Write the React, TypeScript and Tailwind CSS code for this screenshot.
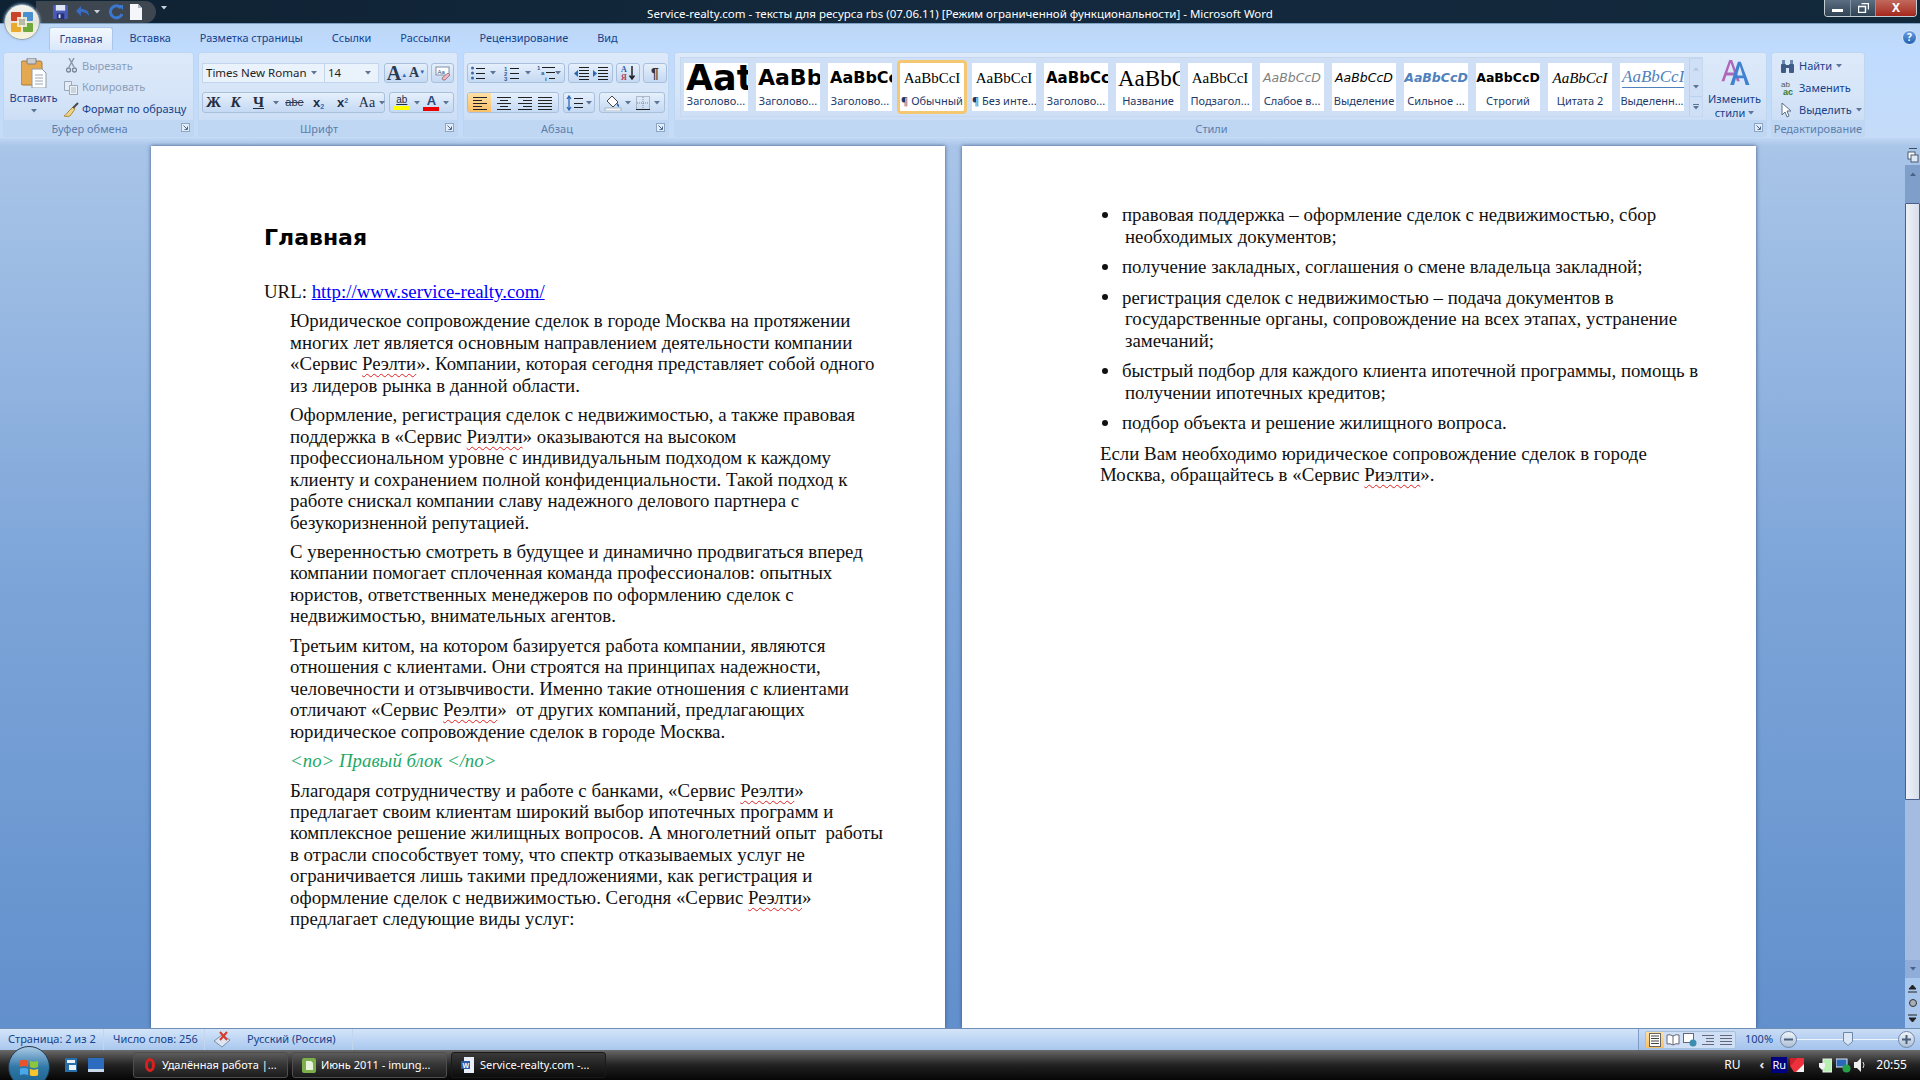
import type { ReactNode } from "react";

function Sp({ children }: { children: ReactNode }) {
  return <span className="underline decoration-wavy decoration-[#e02020] decoration-1 underline-offset-[3px]">{children}</span>;
}

function Para({ children, cls = "" }: { children: ReactNode; cls?: string }) {
  return <p className={`mb-[8px] whitespace-nowrap ${cls}`}>{children}</p>;
}

function Caret({ color = "#5d7596" }: { color?: string }) {
  return (
    <svg width="6" height="4" viewBox="0 0 6 4" className="shrink-0">
      <path d="M0 0h6L3 3.5z" fill={color} />
    </svg>
  );
}

function Launcher() {
  return (
    <svg width="9" height="9" viewBox="0 0 9 9">
      <rect x="0.5" y="0.5" width="8" height="8" fill="#e3edfa" stroke="#8ca6c6" />
      <path d="M2.5 2.5l3.5 3.5M6.5 3.5v3h-3" stroke="#4c6a93" fill="none" />
    </svg>
  );
}

function Group({ w, label, children, launcher = true }: { w: string; label: string; children: ReactNode; launcher?: boolean }) {
  return (
    <div className={`${w} h-[85px] shrink-0 flex flex-col rounded-[3px] border border-[#c0d5ee] bg-gradient-to-b from-[#dce9fa] via-[#d6e5f8] to-[#c6daf4] overflow-hidden`}>
      <div className="flex-1 min-h-0">{children}</div>
      <div className={`relative h-[16px] shrink-0 bg-[#c0d7f3] flex items-center justify-center text-[11px] text-[#5a7ead] leading-none whitespace-nowrap ${launcher ? "pr-[18px]" : ""}`}>
        {label}
        {launcher && (
          <span className="absolute right-[3px] top-[3px] flex">
            <Launcher />
          </span>
        )}
      </div>
    </div>
  );
}

function Seg({ w, children, start = false }: { w: string; children: ReactNode; start?: boolean }) {
  return (
    <div className={`${w} h-full shrink-0 flex items-center ${start ? "justify-start" : "justify-evenly"} rounded-[3px] border border-[#a9c0dc] bg-gradient-to-b from-[#e6f0fc] via-[#d5e4f7] to-[#c4d9f3]`}>
      {children}
    </div>
  );
}

function Cell({ w, children }: { w: string; children: ReactNode }) {
  return <span className={`${w} shrink-0 flex items-center justify-center`}>{children}</span>;
}

function Lines({ ys, x1 = 1, x2 = 15, w = 1 }: { ys: number[]; x1?: number; x2?: number; w?: number }) {
  return <>{ys.map((y) => <path key={y} d={`M${x1} ${y}H${x2}`} stroke="#1d1d1d" strokeWidth={w} />)}</>;
}

function Align({ kind }: { kind: "l" | "c" | "r" | "j" }) {
  const rows = [2.5, 5.5, 8.5, 11.5, 14.5];
  return (
    <svg width="16" height="16" viewBox="0 0 16 16">
      {rows.map((y, i) => {
        const short = i % 2 === 1;
        let a = 1;
        let b = 15;
        if (short && kind === "l") b = 10;
        if (short && kind === "c") { a = 4; b = 12; }
        if (short && kind === "r") a = 6;
        return <path key={y} d={`M${a} ${y}H${b}`} stroke="#222" />;
      })}
    </svg>
  );
}

function BulletIcon() {
  return (
    <svg width="16" height="16" viewBox="0 0 16 16" className="shrink-0">
      <circle cx="2.5" cy="3" r="1.5" fill="#3d6aa5" /><circle cx="2.5" cy="8" r="1.5" fill="#3d6aa5" /><circle cx="2.5" cy="13" r="1.5" fill="#3d6aa5" />
      <Lines ys={[3.5, 8.5, 13.5]} x1={6} />
    </svg>
  );
}

function NumberIcon() {
  return (
    <svg width="16" height="16" viewBox="0 0 16 16" className="shrink-0">
      <g fill="#2e5c99" fontSize="6" fontFamily="Liberation Sans, sans-serif" fontWeight="700">
        <text x="0" y="6">1</text><text x="0" y="11">2</text><text x="0" y="16">3</text>
      </g>
      <Lines ys={[3.5, 8.5, 13.5]} x1={6} />
    </svg>
  );
}

function MultiIcon() {
  return (
    <svg width="18" height="16" viewBox="0 0 18 16" className="shrink-0">
      <g fill="#2e5c99" fontSize="6" fontFamily="Liberation Sans, sans-serif" fontWeight="700">
        <text x="0" y="5">1</text><text x="4" y="10">a</text><text x="8" y="16">i</text>
      </g>
      <path d="M5 2.5H18M9 7.5H18M12 13.5H18" stroke="#1d1d1d" />
    </svg>
  );
}

function Indent({ flip = false }: { flip?: boolean }) {
  return (
    <svg width="16" height="16" viewBox="0 0 16 16">
      <Lines ys={[2.5, 5.5, 8.5, 11.5, 14.5]} x1={6} x2={16} />
      <path d={flip ? "M1 5l4 3.5-4 3.5z" : "M5 5L1 8.5 5 12z"} fill="#2c69b5" />
    </svg>
  );
}

function StyleTile({ preview, label, sel = false, left = false }: { preview: ReactNode; label: string; sel?: boolean; left?: boolean }) {
  return (
    <div className={`w-[64px] h-[48px] shrink-0 bg-white flex flex-col overflow-hidden ${sel ? "outline-[3px] outline-[#f4c873] rounded-[1px]" : ""}`}>
      <div className={`h-[30px] shrink-0 flex items-center overflow-hidden whitespace-nowrap text-black leading-none ${left ? "justify-start pl-[2px]" : "justify-center"}`}>{preview}</div>
      <div className="flex-1 text-center text-[11px] leading-[16px] whitespace-nowrap overflow-hidden text-[#1b3a6b]">{label}</div>
    </div>
  );
}

function EditRow({ icon, label, caret = false }: { icon: ReactNode; label: string; caret?: boolean }) {
  return (
    <div className="h-[22px] flex items-center gap-[4px] pl-[7px] text-[11px]">
      <span className="w-[16px] flex justify-center">{icon}</span>
      <span>{label}</span>
      {caret && <Caret />}
    </div>
  );
}

function ClipRow({ icon, label, dim = false }: { icon: ReactNode; label: string; dim?: boolean }) {
  return (
    <div className={`h-[22px] flex items-center gap-[3px] text-[11px] whitespace-nowrap ${dim ? "text-[#8b9fb9]" : ""}`}>
      <span className="w-[16px] flex justify-center">{icon}</span>
      <span>{label}</span>
    </div>
  );
}

function OfficeOrb() {
  return (
    <div className="absolute left-[4px] top-[4px] w-[36px] h-[36px] rounded-full bg-gradient-to-b from-[#f4f4f0] via-[#e4e4dc] to-[#fbf6dc] border border-[#90a4b4] shadow-[0_0_3px_#9fc0e8] flex items-center justify-center">
      <svg width="24" height="22" viewBox="0 0 24 22">
        <rect x="1" y="1" width="10" height="9" rx="1" fill="#c8452a" />
        <rect x="13" y="1" width="10" height="9" rx="1" fill="#4a8fcf" />
        <rect x="1" y="12" width="10" height="9" rx="1" fill="#e8a92e" />
        <rect x="13" y="12" width="10" height="9" rx="1" fill="#6fa83c" />
        <rect x="7" y="6" width="10" height="10" fill="#f7f3e0" opacity="0.85" />
        <path d="M9 9h6M9 11h6M9 13h6" stroke="#7b8b6e" />
      </svg>
    </div>
  );
}

function Qat() {
  return (
    <div className="ml-[36px] mt-[1px] w-[120px] h-[22px] rounded-r-full bg-[#3e4650] flex items-center pl-[17px]">
      <svg width="15" height="14" viewBox="0 0 16 15" className="shrink-0">
        <rect width="16" height="15" rx="1" fill="#4a5bb5" />
        <rect x="3" y="0" width="10" height="6" fill="#dfe6f7" />
        <rect x="4" y="9" width="8" height="6" fill="#243179" />
        <rect x="6" y="10" width="2" height="4" fill="#dfe6f7" />
      </svg>
      <svg width="15" height="14" viewBox="0 0 15 14" className="ml-[7px] shrink-0">
        <path d="M1 6l5-5v3c5 0 8 2 8 7-2-3-4-4-8-4v4z" fill="#3a6cc5" />
      </svg>
      <span className="ml-[4px] flex"><Caret color="#c8d2dc" /></span>
      <svg width="16" height="16" viewBox="0 0 16 16" className="ml-[8px] shrink-0">
        <path d="M13 4a6 6 0 1 0 1 6" fill="none" stroke="#3a78d0" strokeWidth="3" />
        <path d="M10 1h5v5z" fill="#3a78d0" />
      </svg>
      <svg width="12" height="16" viewBox="0 0 12 16" className="ml-[6px] shrink-0">
        <path d="M0 0h8l4 4v12H0z" fill="#f4f6fa" />
        <path d="M8 0l4 4H8z" fill="#aeb8c4" />
      </svg>
    </div>
  );
}

function WinButtons() {
  return (
    <div className="ml-auto mr-[3px] w-[93px] h-[17px] flex rounded-b-[4px] border border-t-0 border-[#c4ccd4] overflow-hidden">
      <div className="w-[26px] bg-gradient-to-b from-[#5c6f82] to-[#2f4355] flex items-center justify-center border-r border-[#8796a4]">
        <div className="w-[11px] h-[3px] mt-[4px] bg-white" />
      </div>
      <div className="w-[25px] bg-gradient-to-b from-[#5c6f82] to-[#2f4355] flex items-center justify-center border-r border-[#8796a4]">
        <svg width="11" height="10" viewBox="0 0 11 10"><path d="M3.5 .5h7v6M.5 3.5h7v6h-7z" stroke="#fff" fill="none" strokeWidth="1.4" /></svg>
      </div>
      <div className="flex-1 bg-gradient-to-b from-[#c2685c] to-[#a4261c] flex items-center justify-center text-white text-[12px] font-bold leading-none">X</div>
    </div>
  );
}

function StartOrb() {
  return (
    <div className="absolute left-[8px] bottom-[-8px] w-[42px] h-[42px] rounded-full bg-gradient-to-b from-[#a9cbe6] via-[#2f78a8] to-[#1b5f8c] border border-[#24384a] flex items-center justify-center">
      <svg width="20" height="20" viewBox="0 0 22 22">
        <path d="M1 4q4-2 9 0v7q-5-2-9 0z" fill="#e8532c" />
        <path d="M12 4q4 2 9 0v7q-5 2-9 0z" fill="#8cc63f" />
        <path d="M1 13q4-2 9 0v7q-5-2-9 0z" fill="#4aa8ea" />
        <path d="M12 13q4 2 9 0v7q-5 2-9 0z" fill="#f6c42b" />
      </svg>
    </div>
  );
}

function TaskBtn({ icon, label, active = false }: { icon: ReactNode; label: string; active?: boolean }) {
  return (
    <div className={`w-[155px] h-[26px] shrink-0 flex items-center gap-[4px] pl-[8px] text-white text-[11px] whitespace-nowrap rounded-[3px] border ${active ? "border-[#1a1a1a] bg-gradient-to-b from-[#3a3a3a] to-[#0c0c0c]" : "border-[#4e4e4e] bg-gradient-to-b from-[#5c5c5c] via-[#353535] to-[#1c1c1c]"}`}>
      <span className="w-[16px] flex justify-center">{icon}</span>
      <span>{label}</span>
    </div>
  );
}

const tiles: { label: string; sel?: boolean; left?: boolean; preview: ReactNode }[] = [
  { label: "Заголово...", left: true, preview: <span className="font-['DejaVu_Sans',sans-serif] font-bold text-[35px]">Aat</span> },
  { label: "Заголово...", left: true, preview: <span className="font-['DejaVu_Sans',sans-serif] font-bold text-[22px]">AaBb</span> },
  { label: "Заголово...", left: true, preview: <span className="font-['DejaVu_Sans',sans-serif] font-bold text-[16px]">AaBbCc</span> },
  { label: "¶ Обычный", sel: true, preview: <span className="font-['Liberation_Serif',serif] text-[15px]">AaBbCcI</span> },
  { label: "¶ Без инте...", preview: <span className="font-['Liberation_Serif',serif] text-[15px]">AaBbCcI</span> },
  { label: "Заголово...", left: true, preview: <span className="font-['DejaVu_Sans',sans-serif] font-bold text-[15px]">AaBbCc</span> },
  { label: "Название", left: true, preview: <span className="font-['Liberation_Serif',serif] text-[23px]">AaBbCc</span> },
  { label: "Подзагол...", preview: <span className="font-['Liberation_Serif',serif] text-[15px]">AaBbCcI</span> },
  { label: "Слабое в...", preview: <span className="font-['DejaVu_Sans',sans-serif] italic text-[12.5px] text-[#808080]">AaBbCcD</span> },
  { label: "Выделение", preview: <span className="font-['DejaVu_Sans',sans-serif] italic text-[12.5px]">AaBbCcD</span> },
  { label: "Сильное ...", preview: <span className="font-['DejaVu_Sans',sans-serif] italic font-bold text-[12.5px] text-[#4f81bd]">AaBbCcD</span> },
  { label: "Строгий", preview: <span className="font-['DejaVu_Sans',sans-serif] font-bold text-[12.5px]">AaBbCcD</span> },
  { label: "Цитата 2", preview: <span className="font-['Liberation_Serif',serif] italic text-[15px]">AaBbCcI</span> },
  { label: "Выделенн...", left: true, preview: <span className="font-['Liberation_Serif',serif] italic text-[17px] text-[#4f81bd] border-b border-[#4f81bd] pb-[2px]">AaBbCcI</span> },
];

function Ribbon() {
  return (
    <div className="h-[88px] shrink-0 flex pl-[3px] pt-[2px] bg-gradient-to-b from-[#bfdbff] to-[#c5dcf8] text-[#15428b]">
      <Group w="w-[191px]" label="Буфер обмена">
        <div className="flex h-full">
          <div className="w-[59px] shrink-0 flex flex-col items-center pt-[5px]">
            <svg width="26" height="30" viewBox="0 0 26 30">
              <rect x="0" y="3" width="21" height="24" rx="2" fill="#e4a950" stroke="#a87a33" />
              <rect x="6" y="0" width="9" height="6" rx="1" fill="#c9ccd0" stroke="#7c7f84" />
              <path d="M11 11h10l4 4v15H11z" fill="#fff" stroke="#8e9aa8" />
              <path d="M14 17h8M14 20h8M14 23h8M14 26h8" stroke="#9aa6b4" />
            </svg>
            <div className="text-[11px] mt-[3px] leading-[14px]">Вставить</div>
            <div className="mt-[4px]"><Caret /></div>
          </div>
          <div className="flex flex-col pt-[2px]">
            <ClipRow dim label="Вырезать" icon={
              <svg width="11" height="15" viewBox="0 0 11 15"><path d="M3 0l5 9M8 0L3 9" stroke="#8a98aa" strokeWidth="1.5" /><circle cx="2.5" cy="12" r="2" fill="none" stroke="#7b8798" strokeWidth="1.3" /><circle cx="8.5" cy="12" r="2" fill="none" stroke="#7b8798" strokeWidth="1.3" /></svg>
            } />
            <ClipRow dim label="Копировать" icon={
              <svg width="14" height="14" viewBox="0 0 14 14"><path d="M.5 .5h7v9h-7z" fill="#e4ecf5" stroke="#9aa8ba" /><path d="M5.5 4.5h8v9h-8z" fill="#eef3f9" stroke="#9aa8ba" /><path d="M7 7h5M7 9h5M7 11h5" stroke="#aab6c5" /></svg>
            } />
            <ClipRow label="Формат по образцу" icon={
              <svg width="15" height="15" viewBox="0 0 15 15"><path d="M9 5l2 2-5 7q-3 1-6 0 3-2 4-4z" fill="#efd58a" stroke="#a88c3e" /><path d="M9 6l5-5" stroke="#4a4a4a" strokeWidth="2" /></svg>
            } />
          </div>
        </div>
      </Group>

      <div className="w-[4px] shrink-0" />
      <Group w="w-[260px]" label="Шрифт">
        <div className="pl-[3px] pt-[10px] flex flex-col gap-[9px]">
          <div className="h-[20px] flex">
            <div className="w-[123px] h-full flex items-center justify-between pl-[3px] pr-[7px] bg-[#eaf2fc] border border-[#c2d5ec] text-[11.5px] text-[#1e1e1e]">
              Times New Roman <Caret />
            </div>
            <div className="w-[54px] h-full flex items-center justify-between pl-[3px] pr-[7px] bg-[#eaf2fc] border border-l-0 border-[#c2d5ec] text-[11.5px] text-[#1e1e1e]">
              14 <Caret />
            </div>
            <div className="w-[5px]" />
            <Seg w="w-[44px]">
              <span className="font-['Liberation_Serif',serif] font-bold text-[20px] leading-none text-[#2a3a52]">A<sup className="text-[6px] text-[#2c69b5]">▲</sup></span>
              <span className="font-['Liberation_Serif',serif] font-bold text-[14px] leading-none text-[#2a3a52]">A<sup className="text-[6px] text-[#2c69b5]">▼</sup></span>
            </Seg>
            <div className="w-[3px]" />
            <Seg w="w-[23px]">
              <svg width="16" height="15" viewBox="0 0 16 15">
                <rect x="1" y="1" width="13" height="8" fill="#fff" stroke="#7f8fa4" />
                <text x="2.5" y="7.5" fontSize="6" fontFamily="Liberation Sans, sans-serif" fill="#2b4a7a">Aa</text>
                <path d="M7 12l6-5 2 2-5 5H8z" fill="#f1b7c4" stroke="#a27b86" />
              </svg>
            </Seg>
          </div>
          <div className="h-[21px] flex">
            <Seg w="w-[183px]" start>
              <Cell w="w-[21px]"><span className="font-['Liberation_Serif',serif] font-bold text-[15px] text-[#1f2d40]">Ж</span></Cell>
              <Cell w="w-[23px]"><span className="font-['Liberation_Serif',serif] font-bold italic text-[15px] text-[#1f2d40]">К</span></Cell>
              <Cell w="w-[23px]"><span className="font-['Liberation_Serif',serif] font-bold underline text-[15px] text-[#1f2d40]">Ч</span></Cell>
              <Cell w="w-[12px]"><Caret /></Cell>
              <Cell w="w-[25px]"><span className="font-['Liberation_Sans',sans-serif] line-through text-[11px] text-[#2a3a52]">abe</span></Cell>
              <Cell w="w-[23px]"><span className="font-['Liberation_Sans',sans-serif] font-bold text-[13px] text-[#1f2d40]">x<sub className="text-[7px] text-[#2c69b5]">2</sub></span></Cell>
              <Cell w="w-[25px]"><span className="font-['Liberation_Sans',sans-serif] font-bold text-[13px] text-[#1f2d40]">x<sup className="text-[7px] text-[#2c69b5]">2</sup></span></Cell>
              <Cell w="w-[24px]"><span className="font-['Liberation_Serif',serif] text-[14px] text-[#1f2d40]">Aa</span></Cell>
              <Caret />
            </Seg>
            <div className="w-[4px]" />
            <Seg w="w-[65px]">
              <span className="flex flex-col items-center leading-none">
                <span className="text-[10px] text-[#1f2d40] font-['Liberation_Sans',sans-serif] underline">ab</span>
                <span className="w-[16px] h-[4px] bg-[#ffff00] mt-[1px]" />
              </span>
              <Caret />
              <span className="flex flex-col items-center leading-none">
                <span className="text-[13px] text-[#2c4a7d] font-bold font-['Liberation_Sans',sans-serif]">A</span>
                <span className="w-[16px] h-[4px] bg-[#ee0000]" />
              </span>
              <Caret />
            </Seg>
          </div>
        </div>
      </Group>

      <div className="w-[5px] shrink-0" />
      <Group w="w-[206px]" label="Абзац">
        <div className="pl-[3px] pt-[10px] flex flex-col gap-[9px]">
          <div className="h-[20px] flex">
            <Seg w="w-[98px]" start>
              <span className="ml-[2px] flex"><BulletIcon /></span>
              <span className="ml-[4px] flex"><Caret /></span>
              <span className="ml-[8px] flex"><NumberIcon /></span>
              <span className="ml-[5px] flex"><Caret /></span>
              <span className="ml-[6px] flex"><MultiIcon /></span>
              <Caret />
            </Seg>
            <div className="w-[3px]" />
            <Seg w="w-[45px]"><Indent /><Indent flip /></Seg>
            <div className="w-[3px]" />
            <Seg w="w-[24px]">
              <svg width="16" height="16" viewBox="0 0 16 16">
                <text x="1" y="7" fontSize="8" fontWeight="700" fontFamily="Liberation Serif, serif" fill="#2c5fa8">А</text>
                <text x="1" y="15" fontSize="8" fontWeight="700" fontFamily="Liberation Serif, serif" fill="#b0405a">Я</text>
                <path d="M12 1v12M9.5 10.5L12 14l2.5-3.5" stroke="#222" strokeWidth="1.5" fill="none" />
              </svg>
            </Seg>
            <div className="w-[3px]" />
            <Seg w="w-[24px]"><span className="font-['Liberation_Sans',sans-serif] font-bold text-[14px] text-[#333]">¶</span></Seg>
          </div>
          <div className="h-[21px] flex">
            <div className="w-[92px] h-full flex rounded-[3px] border border-[#a9c0dc] overflow-hidden bg-gradient-to-b from-[#e6f0fc] to-[#c4d9f3]">
              <div className="w-[23px] flex items-center justify-center bg-gradient-to-b from-[#fde0a5] to-[#f9bf66]"><Align kind="l" /></div>
              <div className="flex-1 flex items-center justify-evenly"><Align kind="c" /><Align kind="r" /><Align kind="j" /></div>
            </div>
            <div className="w-[4px]" />
            <Seg w="w-[32px]">
              <svg width="17" height="16" viewBox="0 0 17 16">
                <path d="M3 1v14M1 4l2-3 2 3M1 12l2 3 2-3" stroke="#2c69b5" fill="none" strokeWidth="1.3" />
                <path d="M8 3.5h9M8 8.5h9M8 12.5h9" stroke="#222" />
              </svg>
              <Caret />
            </Seg>
            <div className="w-[4px]" />
            <Seg w="w-[66px]">
              <svg width="18" height="16" viewBox="0 0 18 16">
                <path d="M8 1l6 6-5 5-6-6z" fill="#fff" stroke="#444" />
                <path d="M13 8q3 2 2 4-3-1-2-4z" fill="#2c69b5" />
                <rect x="1" y="13" width="16" height="3" fill="#f6f6f6" stroke="#8b96a5" strokeWidth="0.6" />
              </svg>
              <Caret />
              <svg width="16" height="16" viewBox="0 0 16 16">
                <rect x="1.5" y="1.5" width="13" height="13" fill="none" stroke="#7c8796" strokeDasharray="1 1" />
                <path d="M8 2v12M2 8h12" stroke="#7c8796" strokeDasharray="1 1" />
                <path d="M1 14.5h14" stroke="#222" />
              </svg>
              <Caret />
            </Seg>
          </div>
        </div>
      </Group>

      <div className="w-[5px] shrink-0" />
      <Group w="w-[1093px]" label="Стили">
        <div className="flex h-full">
          <div className="ml-[5px] mt-[4px] h-[60px] w-[1023px] shrink-0 flex border border-[#c5d8ef] bg-[#cfe0f6]">
            <div className="flex-1 flex items-center gap-[8px] pl-[3px]">
              {tiles.map((t, i) => <StyleTile key={i} {...t} />)}
            </div>
            <div className="w-[13px] shrink-0 flex flex-col border-l border-[#bcd2ec]">
              <div className="flex-1 flex items-center justify-center border-b border-[#bcd2ec] rotate-180"><Caret color="#b5c4d8" /></div>
              <div className="flex-1 flex items-center justify-center border-b border-[#bcd2ec]"><Caret /></div>
              <div className="flex-1 flex flex-col items-center justify-center gap-[1px]"><div className="w-[6px] h-px bg-[#5d7596]" /><Caret /></div>
            </div>
          </div>
          <div className="flex-1 flex flex-col items-center pt-[5px]">
            <svg width="34" height="30" viewBox="0 0 34 30">
              <path d="M3 24L11 2h3l8 22h-3l-2-6H8l-2 6zM9 15h7l-3.5-10z" fill="#b066b8" fillRule="evenodd" />
              <path d="M12 28L20 4h3l9 24h-4l-2-7h-8l-2 7zM19 18h6l-3-10z" fill="#3f82cf" fillRule="evenodd" />
            </svg>
            <div className="text-[11px] leading-[14px] mt-[5px]">Изменить</div>
            <div className="text-[11px] leading-[14px] flex items-center gap-[3px]">стили <Caret /></div>
          </div>
        </div>
      </Group>

      <div className="w-[4px] shrink-0" />
      <Group w="w-[94px]" label="Редактирование" launcher={false}>
        <div className="pt-[2px]">
          <EditRow caret label="Найти" icon={
            <svg width="15" height="15" viewBox="0 0 15 15"><rect x="1" y="5" width="5" height="9" rx="1" fill="#3e5c86" /><rect x="9" y="5" width="5" height="9" rx="1" fill="#3e5c86" /><rect x="5" y="6" width="5" height="3" fill="#3e5c86" /><rect x="2" y="1" width="3" height="4" fill="#6d88ad" /><rect x="10" y="1" width="3" height="4" fill="#6d88ad" /></svg>
          } />
          <EditRow label="Заменить" icon={
            <svg width="16" height="15" viewBox="0 0 16 15"><text x="2" y="6" fontSize="8" fontFamily="Liberation Sans, sans-serif" fill="#555">ab</text><text x="4" y="14" fontSize="9" fontWeight="700" fontFamily="Liberation Sans, sans-serif" fill="#2c7a3a">ac</text></svg>
          } />
          <EditRow caret label="Выделить" icon={
            <svg width="12" height="16" viewBox="0 0 12 16"><path d="M1 1v12l3-3 2 5 2-1-2-5h4z" fill="#fff" stroke="#5d6f86" /></svg>
          } />
        </div>
      </Group>
    </div>
  );
}

function Pages() {
  return (
    <div className="flex-1 min-h-0 flex pl-[151px] gap-[17px] font-['Liberation_Serif','Times_New_Roman',serif] text-[18.85px] leading-[21.45px] text-[#111] bg-gradient-to-b from-[#a9c5e8] via-[#7ca4d8] to-[#6290cc]">
      <div className="w-[794px] h-full shrink-0 bg-white shadow-[0_0_4px_#3d5a85] pl-[113px] pt-[77px]">
        <h1 className="font-['DejaVu_Sans',sans-serif] font-bold text-[22px] leading-[30px] text-black">Главная</h1>
        <p className="mt-[28px] mb-[8px]">URL: <a className="text-[#0000ff] underline">http://www.service-realty.com/</a></p>
        <div className="pl-[26px]">
          <Para>
            Юридическое сопровождение сделок в городе Москва на протяжении<br />
            многих лет является основным направлением деятельности компании<br />
            «Сервис <Sp>Реэлти</Sp>». Компании, которая сегодня представляет собой одного<br />
            из лидеров рынка в данной области.
          </Para>
          <Para>
            Оформление, регистрация сделок с недвижимостью, а также правовая<br />
            поддержка в «Сервис <Sp>Риэлти</Sp>» оказываются на высоком<br />
            профессиональном уровне с индивидуальным подходом к каждому<br />
            клиенту и сохранением полной конфиденциальности. Такой подход к<br />
            работе снискал компании славу надежного делового партнера с<br />
            безукоризненной репутацией.
          </Para>
          <Para>
            С уверенностью смотреть в будущее и динамично продвигаться вперед<br />
            компании помогает сплоченная команда профессионалов: опытных<br />
            юристов, ответственных менеджеров по оформлению сделок с<br />
            недвижимостью, внимательных агентов.
          </Para>
          <Para>
            Третьим китом, на котором базируется работа компании, являются<br />
            отношения с клиентами. Они строятся на принципах надежности,<br />
            человечности и отзывчивости. Именно такие отношения с клиентами<br />
            отличают «Сервис <Sp>Реэлти</Sp>» &nbsp;от других компаний, предлагающих<br />
            юридическое сопровождение сделок в городе Москва.
          </Para>
          <Para cls="italic text-[#1fa868]">&lt;по&gt; Правый блок &lt;/по&gt;</Para>
          <Para>
            Благодаря сотрудничеству и работе с банками, «Сервис <Sp>Реэлти</Sp>»<br />
            предлагает своим клиентам широкий выбор ипотечных программ и<br />
            комплексное решение жилищных вопросов. А многолетний опыт &nbsp;работы<br />
            в отрасли способствует тому, что спектр отказываемых услуг не<br />
            ограничивается лишь такими предложениями, как регистрация и<br />
            оформление сделок с недвижимостью. Сегодня «Сервис <Sp>Реэлти</Sp>»<br />
            предлагает следующие виды услуг:
          </Para>
        </div>
      </div>

      <div className="w-[794px] h-full shrink-0 bg-white shadow-[0_0_4px_#3d5a85] pl-[138px] pt-[58px] leading-[21.5px]">
        {[
          ["правовая поддержка – оформление сделок с недвижимостью, сбор", "необходимых документов;"],
          ["получение закладных, соглашения о смене владельца закладной;"],
          ["регистрация сделок с недвижимостью – подача документов в", "государственные органы, сопровождение на всех этапах, устранение", "замечаний;"],
          ["быстрый подбор для каждого клиента ипотечной программы, помощь в", "получении ипотечных кредитов;"],
          ["подбор объекта и решение жилищного вопроса."],
        ].map((item, i) => (
          <div key={i} className="flex mb-[9px] whitespace-nowrap">
            <div className="w-[22px] h-[21.5px] shrink-0 flex items-center pl-[2px]">
              <span className="w-[6px] h-[6px] rounded-full bg-[#111]" />
            </div>
            <div>
              {item.map((line, j) => <div key={j} className={j > 0 ? "pl-[3px]" : ""}>{line}</div>)}
            </div>
          </div>
        ))}
        <p className="whitespace-nowrap">
          Если Вам необходимо юридическое сопровождение сделок в городе<br />
          Москва, обращайтесь в «Сервис <Sp>Риэлти</Sp>».
        </p>
      </div>

      <div className="ml-auto w-[15px] h-full shrink-0 flex flex-col items-center">
        <div className="h-[19px] shrink-0 flex flex-col items-center">
          <div className="w-[8px] h-px bg-[#3c4c63] mt-[2px]" />
          <svg width="12" height="12" viewBox="0 0 12 12" className="mt-[2px]"><rect x="1" y="1" width="7" height="7" fill="#fff" stroke="#4a5a70" /><rect x="4" y="4" width="7" height="7" fill="#dfe8f4" stroke="#4a5a70" /></svg>
        </div>
        <div className="w-full h-[38px] shrink-0 pt-[7px] flex justify-center bg-[#7f9fca]">
          <span className="rotate-180 h-[4px] flex"><Caret color="#4a6288" /></span>
        </div>
        <div className="w-full h-[597px] shrink-0 rounded-[1px] bg-gradient-to-r from-[#eef1f7] to-[#d7deeb] border border-[#4a5f8c]" />
        <div className="w-full flex-1 bg-[#a3bce0]" />
        <div className="w-full h-[18px] shrink-0 flex items-center justify-center bg-[#8fadd8]"><Caret color="#4a6288" /></div>
        <div className="h-[50px] shrink-0 flex flex-col items-center justify-evenly bg-[#a9c6ec] w-full">
          <svg width="9" height="8" viewBox="0 0 9 8"><path d="M4.5 0L8 4H1zM0 7h9" fill="#222" stroke="#222" /></svg>
          <div className="w-[8px] h-[8px] rounded-full bg-[#a4adb8] border border-[#333]" />
          <svg width="9" height="8" viewBox="0 0 9 8"><path d="M4.5 8L8 4H1zM0 1h9" fill="#222" stroke="#222" /></svg>
        </div>
      </div>
    </div>
  );
}

function ViewIcon({ children, on = false }: { children: ReactNode; on?: boolean }) {
  return <div className={`w-[18px] h-full flex items-center justify-center ${on ? "bg-gradient-to-b from-[#fde0a5] to-[#f9bf66]" : ""}`}>{children}</div>;
}

function ZoomBtn({ plus = false }: { plus?: boolean }) {
  return (
    <div className="w-[17px] h-[17px] rounded-full shrink-0 bg-gradient-to-b from-[#f0f5fb] to-[#aebfd4] border border-[#6d87a8] flex items-center justify-center">
      <svg width="9" height="9" viewBox="0 0 9 9"><path d={plus ? "M0 4.5h9M4.5 0v9" : "M0 4.5h9"} stroke="#4a5f7c" strokeWidth="2" /></svg>
    </div>
  );
}

function StatusBar() {
  return (
    <div className="h-[22px] shrink-0 flex items-center border-t border-[#6f8fb6] bg-gradient-to-b from-[#d4e5f9] to-[#a9c7ee] text-[11px] text-[#15428b] whitespace-nowrap">
      <div className="w-[104px] h-full pl-[8px] flex items-center border-r border-[#c4d6ee]">Страница: 2 из 2</div>
      <div className="w-[101px] h-full pl-[9px] flex items-center border-r border-[#c4d6ee]">Число слов: 256</div>
      <div className="w-[148px] h-full pl-[8px] flex items-center gap-[15px] border-r border-[#c4d6ee]">
        <svg width="19" height="17" viewBox="0 0 19 17">
          <path d="M1 10l8-6 8 5-8 7z" fill="#dce6f2" stroke="#7b8ea8" />
          <path d="M7 1l7 8M14 1L7 9" stroke="#d8392b" strokeWidth="2" />
        </svg>
        <span>Русский (Россия)</span>
      </div>
      <div className="ml-auto w-[282px] h-full flex items-center border-l border-[#7f9cc2] pl-[6px] bg-gradient-to-b from-[#c9dcf5] to-[#a4c3ec]">
        <div className="w-[91px] h-[18px] flex border border-[#a9c0dc] rounded-[2px] bg-[#cfe0f6]">
          <ViewIcon on>
            <svg width="12" height="14" viewBox="0 0 12 14"><rect x=".5" y=".5" width="11" height="13" fill="#fff" stroke="#666" /><path d="M2 3h8M2 5.5h8M2 8h8M2 10.5h8" stroke="#444" /></svg>
          </ViewIcon>
          <ViewIcon>
            <svg width="14" height="12" viewBox="0 0 14 12"><path d="M7 2q-3-2-6-1v9q3-1 6 1 3-2 6-1V1q-3-1-6 1zM7 2v9" fill="#fff" stroke="#667" /></svg>
          </ViewIcon>
          <ViewIcon>
            <svg width="14" height="14" viewBox="0 0 14 14"><rect x=".5" y=".5" width="10" height="9" fill="#fff" stroke="#667" /><circle cx="10" cy="10" r="3.5" fill="#3a8fb0" /></svg>
          </ViewIcon>
          <ViewIcon>
            <svg width="12" height="12" viewBox="0 0 12 12"><path d="M0 1.5h12M4 4.5h8M4 7.5h8M0 10.5h12" stroke="#667" /></svg>
          </ViewIcon>
          <ViewIcon>
            <svg width="12" height="12" viewBox="0 0 12 12"><path d="M0 1.5h12M0 4.5h12M0 7.5h12M0 10.5h12" stroke="#667" /></svg>
          </ViewIcon>
        </div>
        <span className="ml-[9px] w-[35px]">100%</span>
        <ZoomBtn />
        <div className="relative flex-1 h-px bg-[#eef4fb]">
          <svg width="10" height="14" viewBox="0 0 10 14" className="absolute left-[46px] top-[-7px]"><path d="M.5.5h9v9L5 13.5.5 9.5z" fill="#dbe7f5" stroke="#6d87a8" /></svg>
        </div>
        <ZoomBtn plus />
        <div className="w-[5px]" />
      </div>
    </div>
  );
}

function TaskBar() {
  return (
    <div className="relative h-[30px] shrink-0 flex items-center bg-gradient-to-b from-[#6a6a6a] via-[#222] via-50% to-[#060606] text-white text-[12px]">
      <StartOrb />
      <div className="w-[65px] shrink-0" />
      <svg width="12" height="14" viewBox="0 0 12 14" className="shrink-0"><rect width="12" height="14" fill="#2a6ea8" /><rect x="2" y="2" width="8" height="3" fill="#e9f2fa" /><rect x="4" y="7" width="7" height="5" fill="#e9f2fa" /></svg>
      <svg width="16" height="14" viewBox="0 0 16 14" className="shrink-0 ml-[11px]"><rect width="16" height="14" fill="#2b6cbf" /><rect y="11" width="16" height="3" fill="#c9d8ea" /></svg>
      <div className="w-[29px] shrink-0" />
      <div className="flex gap-[4px]">
        <TaskBtn label="Удалённая работа |..." icon={
          <span className="w-[10px] h-[14px] rounded-[50%] border-[3px] border-[#d8201c]" />
        } />
        <TaskBtn label="Июнь 2011 - imung..." icon={
          <svg width="14" height="15" viewBox="0 0 14 15"><rect width="14" height="15" rx="2" fill="#7db04a" /><path d="M4 3h5l2 2v7H4z" fill="#e8f2dc" /></svg>
        } />
        <TaskBtn active label="Service-realty.com -..." icon={
          <svg width="15" height="16" viewBox="0 0 15 16"><path d="M3 0h10v16H3z" fill="#e8eef7" /><rect y="4" width="9" height="8" fill="#2a5ba8" /><text x="1.5" y="10.5" fontSize="7" fontWeight="700" fontFamily="Liberation Sans, sans-serif" fill="#fff">W</text></svg>
        } />
      </div>
      <div className="ml-auto flex items-center mr-[13px]">
        <span>RU</span>
        <span className="ml-[19px] font-bold text-[#e8e8e8] text-[13px]">‹</span>
        <span className="ml-[7px] w-[16px] h-[16px] bg-[#000080] text-[11px] leading-[16px] text-center">Ru</span>
        <svg width="14" height="14" viewBox="0 0 14 14" className="ml-[3px]"><path d="M0 0h7L0 8z" fill="#d0202a" /><path d="M0 8l7-8h7v14H4z" fill="#ee2f3c" /><path d="M6 14l8-8v8z" fill="#f2f2f2" /></svg>
        <svg width="14" height="16" viewBox="0 0 14 16" className="ml-[14px]"><rect x="5" y="2" width="9" height="13" fill="#b7efb0" stroke="#eee" /><path d="M1 6h6v4L4 13 1 10z" fill="#f2f2f2" /></svg>
        <svg width="15" height="15" viewBox="0 0 15 15" className="ml-[4px]"><rect x="0" y="1" width="11" height="8" fill="#2c68b8" stroke="#dfe8f2" /><circle cx="10.5" cy="10.5" r="4" fill="#27a04a" /></svg>
        <svg width="12" height="14" viewBox="0 0 12 14" className="ml-[3px]"><path d="M0 4h3l4-4v14l-4-4H0z" fill="#eee" /><path d="M9 4q2 3 0 6" stroke="#ddd" fill="none" /></svg>
        <span className="ml-[10px]">20:55</span>
      </div>
    </div>
  );
}

export default function App() {
  return (
    <div className="relative w-[1920px] h-[1080px] overflow-hidden flex flex-col font-['Noto_Sans',sans-serif]">
      <div className="h-[24px] shrink-0 grid grid-cols-[1fr_auto_1fr] border-b border-[#7fa2c4] bg-gradient-to-r from-[#0e2233] via-[#14293d] to-[#11273a]">
        <div className="flex items-start"><Qat /><div className="ml-[5px] mt-[6px]"><Caret color="#c8d2dc" /></div></div>
        <div className="text-[11.5px] leading-[27px] text-white whitespace-nowrap">Service-realty.com - тексты для ресурса rbs (07.06.11) [Режим ограниченной функциональности] - Microsoft Word</div>
        <div className="flex items-start"><WinButtons /></div>
      </div>

      <div className="h-[26px] shrink-0 flex items-end pl-[49px] bg-gradient-to-b from-[#bcd6f5] to-[#bfdbff] text-[10.9px] text-[#15428b] whitespace-nowrap">
        <div className="w-[64px] h-[23px] flex items-center justify-center rounded-t-[3px] border border-b-0 border-[#a9c7ea] bg-gradient-to-b from-[#f3f8fe] to-[#dbe8fa]">Главная</div>
        <div className="flex ml-[2px]">
          {["Вставка", "Разметка страницы", "Ссылки", "Рассылки", "Рецензирование", "Вид"].map((t) => (
            <div key={t} className="h-[23px] flex items-center px-[14.5px]">{t}</div>
          ))}
        </div>
        <div className="ml-auto mr-[3px] self-center w-[15px] h-[15px] rounded-full bg-gradient-to-b from-[#6ea4e4] to-[#1e5fb0] border border-[#dbe8fa] flex items-center justify-center text-white text-[10px] font-bold leading-none">?</div>
      </div>

      <OfficeOrb />
      <Ribbon />
      <div className="h-[8px] shrink-0 bg-gradient-to-b from-[#c0d7f4] to-[#a9c5e8]" />
      <Pages />
      <StatusBar />
      <TaskBar />
    </div>
  );
}
